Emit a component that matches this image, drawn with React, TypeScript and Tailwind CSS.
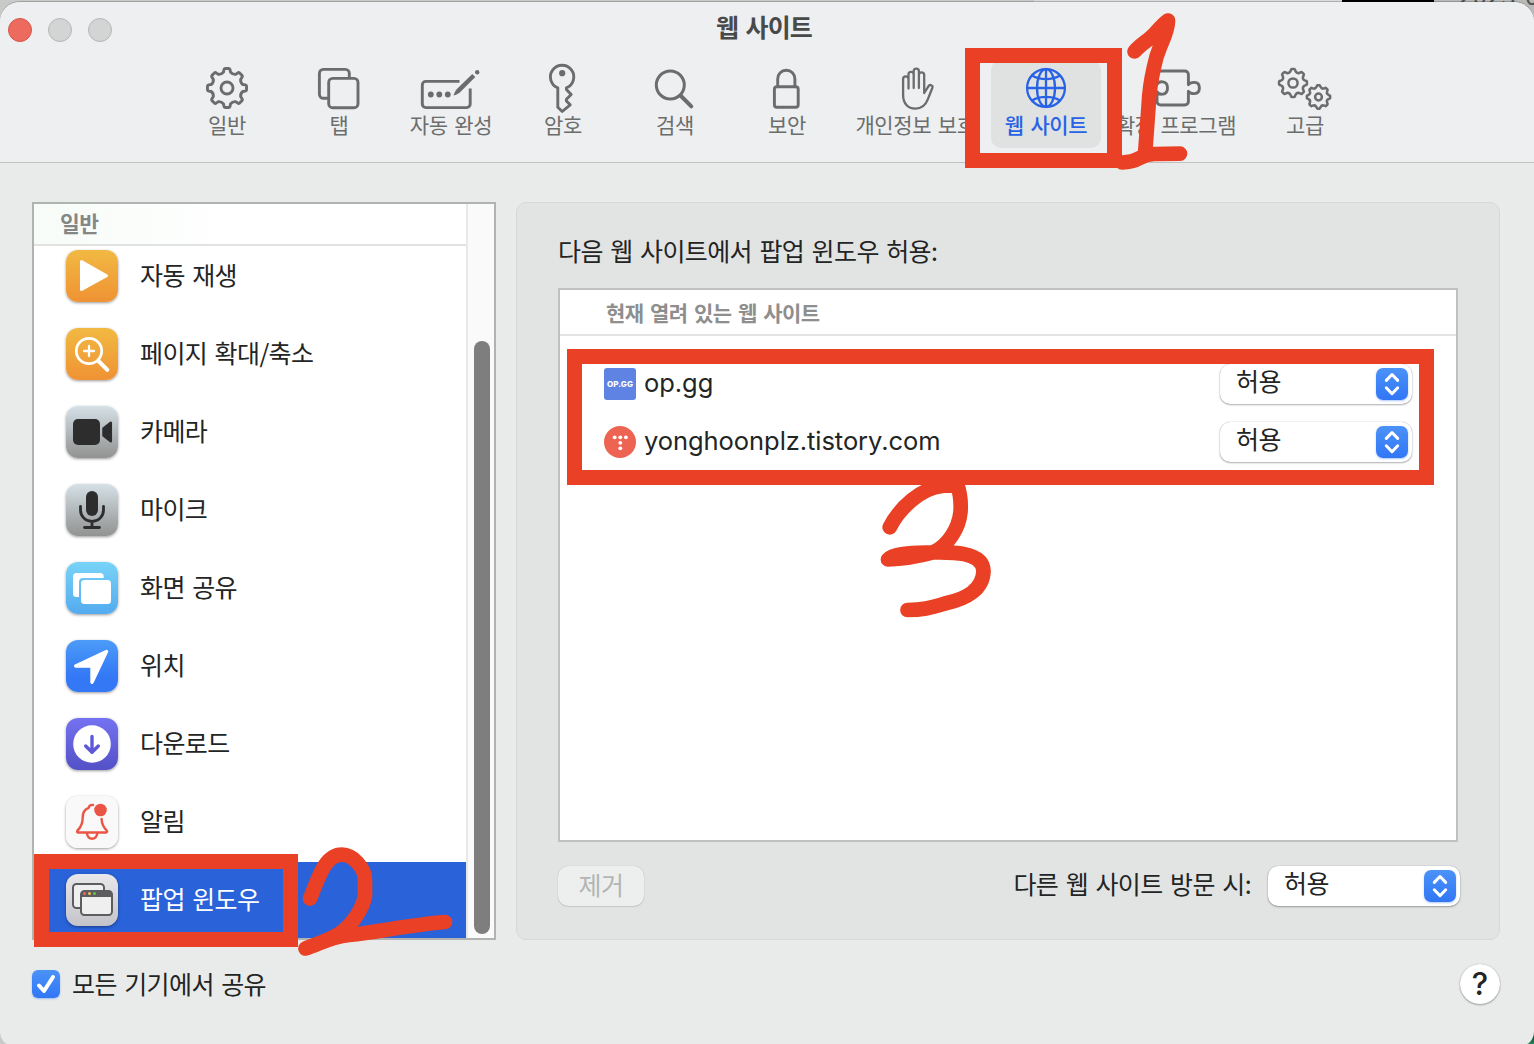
import type { ReactNode } from "react"
import clsx from "clsx"

// Outline of a cog with eight rounded teeth
function gearPath(cx: number, cy: number, outer: number, root: number) {
  const teeth = 8
  const point = (r: number, deg: number) => {
    const a = ((deg - 90) * Math.PI) / 180
    return `${(cx + r * Math.cos(a)).toFixed(2)} ${(cy + r * Math.sin(a)).toFixed(2)}`
  }
  let d = ""
  for (let i = 0; i < teeth; i++) {
    const mid = (i * 360) / teeth
    d += `${i === 0 ? "M" : "L"}${point(root + 1.2, mid - 12.5)}`
    d += `L${point(outer - 1, mid - 9.5)}Q${point(outer, mid - 8.5)} ${point(outer, mid - 5)}`
    d += `L${point(outer, mid + 5)}Q${point(outer, mid + 8.5)} ${point(outer - 1, mid + 9.5)}`
    d += `L${point(root + 1.2, mid + 12.5)}Q${point(root - 0.6, mid + 22.5)} ${point(root + 1.2, mid + 32.5)}`
  }
  return d + "Z"
}

function ToolIcon({ width = 48, children }: { width?: number; children: ReactNode }) {
  return (
    <svg
      width={width}
      height="52"
      viewBox={`0 0 ${width} 52`}
      fill="none"
      stroke="currentColor"
      strokeWidth="2.9"
      strokeLinecap="round"
      strokeLinejoin="round"
    >
      {children}
    </svg>
  )
}

const tools = [
  {
    label: "일반",
    width: "w-28",
    icon: (
      <ToolIcon>
        <path d={gearPath(24, 26, 19.6, 15)} />
        <circle cx="24" cy="26" r="6" />
      </ToolIcon>
    ),
  },
  {
    label: "탭",
    width: "w-28",
    icon: (
      <ToolIcon>
        <path d="M12 36.3H8.4a4 4 0 0 1-4-4V11.4a4 4 0 0 1 4-4h21.9a4 4 0 0 1 4 4V15" />
        <rect x="13.7" y="16.4" width="29.3" height="29.3" rx="4" />
      </ToolIcon>
    ),
  },
  {
    label: "자동 완성",
    width: "w-28",
    icon: (
      <ToolIcon width={66}>
        <path d="M41.5 19.4H7.8a3.5 3.5 0 0 0-3.5 3.5v19.2a3.5 3.5 0 0 0 3.5 3.5h40.9a3.5 3.5 0 0 0 3.5-3.5V26.5" strokeLinecap="butt" />
        <g fill="currentColor" stroke="none">
          <circle cx="12.8" cy="32.5" r="2.9" />
          <circle cx="21.3" cy="32.5" r="2.9" />
          <circle cx="29.8" cy="32.5" r="2.9" />
          <path d="M35.5 33.6c1-3 2-5.2 3.4-6.7L54.3 12l3 3-15.2 15.2c-1.7 1.5-3.9 2.7-6.6 3.4z" />
          <circle cx="59.2" cy="10.2" r="2.2" />
        </g>
      </ToolIcon>
    ),
  },
  {
    label: "암호",
    width: "w-28",
    icon: (
      <ToolIcon>
        <path d="M18.8 25.8a11.7 11.7 0 1 1 8.6 0V27.5l4.8 5-4.8 4.8V39l3.8 3.8-8 6.7-4.4-4.2z" />
        <circle cx="23.2" cy="11.2" r="3.1" fill="currentColor" stroke="none" />
      </ToolIcon>
    ),
  },
  {
    label: "검색",
    width: "w-28",
    icon: (
      <ToolIcon>
        <circle cx="19.3" cy="23" r="14" strokeWidth="3" />
        <path d="M30 34l10.3 10.3" strokeWidth="4" />
      </ToolIcon>
    ),
  },
  {
    label: "보안",
    width: "w-28",
    icon: (
      <ToolIcon>
        <rect x="11.4" y="24.7" width="23.8" height="20.6" rx="2.5" />
        <path d="M14.7 24V17c0-5 3.7-8.7 8.6-8.7s8.6 3.7 8.6 8.7v7" />
      </ToolIcon>
    ),
  },
  {
    label: "개인정보 보호",
    width: "w-[145px]",
    icon: (
      <ToolIcon>
        <path
          d="M17.5 26.5V17a2.7 2.7 0 0 0-5.4 0V33c0 8.5 4.8 13.7 12.3 13.7 6.3 0 10.2-3.5 12.5-9.5l4.4-11.2c1-2.8-2.5-4-3.9-1.7L33.2 31V12.5a2.7 2.7 0 0 0-5.3 0V26M27.9 13V9.3a2.6 2.6 0 0 0-5.2 0V26M22.7 14v-1.5a2.6 2.6 0 0 0-5.2 0V18"
          strokeWidth="2.3"
        />
      </ToolIcon>
    ),
  },
  {
    label: "웹 사이트",
    width: "w-[116px]",
    active: true,
    icon: (
      <ToolIcon>
        <g strokeWidth="2.3">
          <circle cx="24" cy="26" r="18.9" />
          <ellipse cx="24" cy="26" rx="9" ry="18.9" />
          <path d="M24 7v38M5 26h38M10 13.5c8 4.8 20 4.8 28 0M10 38.5c8-4.8 20-4.8 28 0" />
        </g>
      </ToolIcon>
    ),
  },
  {
    label: "확장 프로그램",
    width: "w-36",
    icon: (
      <ToolIcon width={52}>
        <path d="M7 22.2V12.6A3.6 3.6 0 0 1 10.6 9h24.2a3.6 3.6 0 0 1 3.6 3.6v10.2c1.6-2.5 11-5 11 3.2s-9.4 5.7-11 3.2v10.2a3.6 3.6 0 0 1-3.6 3.6H10.6A3.6 3.6 0 0 1 7 39.4V29.8c1.6 3 10.5 4.6 10.5-3.8S8.6 19.2 7 22.2z" />
      </ToolIcon>
    ),
  },
  {
    label: "고급",
    width: "w-[114px]",
    icon: (
      <ToolIcon width={60}>
        <g strokeWidth="2.5">
          <path d={gearPath(18, 21, 14, 10.7)} />
          <circle cx="18" cy="21" r="4.6" />
          <path d={gearPath(43.5, 35, 11.7, 9)} />
          <circle cx="43.5" cy="35" r="3.4" />
        </g>
      </ToolIcon>
    ),
  },
]

function AppIcon({ className, children }: { className: string; children: ReactNode }) {
  return (
    <div className={clsx("mb-0.5 size-[52px] shrink-0 rounded-xl bg-linear-to-b shadow-[0_1px_3px_rgba(0,0,0,0.4)]", className)}>
      <svg width="52" height="52" viewBox="0 0 52 52" fill="none" strokeLinecap="round" strokeLinejoin="round">
        {children}
      </svg>
    </div>
  )
}

const settings = [
  {
    label: "자동 재생",
    icon: (
      <AppIcon className="from-[#f1b942] to-[#ef9234]">
        <path d="M15.5 11.5L40.5 25.7 15.5 39.5z" fill="#fff" stroke="#fff" strokeWidth="3" />
      </AppIcon>
    ),
  },
  {
    label: "페이지 확대/축소",
    icon: (
      <AppIcon className="from-[#f1b942] to-[#ef9234]">
        <g stroke="#fff">
          <circle cx="23" cy="23" r="12.7" strokeWidth="2.7" />
          <path d="M23 18v10M18 23h10" strokeWidth="2.3" />
          <path d="M32.5 33l8.8 8.8" strokeWidth="4" />
        </g>
      </AppIcon>
    ),
  },
  {
    label: "카메라",
    icon: (
      <AppIcon className="from-[#d5e1e7] to-[#929292]">
        <rect x="7" y="13" width="27" height="26" rx="5" fill="#2d2d2d" />
        <path d="M37.5 22.5l7.3-5.8v18.6l-7.3-5.8z" fill="#2d2d2d" stroke="#2d2d2d" strokeWidth="2.5" />
      </AppIcon>
    ),
  },
  {
    label: "마이크",
    icon: (
      <AppIcon className="from-[#d5e1e7] to-[#929292]">
        <rect x="20" y="7" width="12" height="25" rx="6" fill="#2d2d2d" />
        <path d="M14.5 22.5v3.5a11.5 11.5 0 0 0 23 0v-3.5M26 38v5M18.5 43.5h15" stroke="#2d2d2d" strokeWidth="2.8" />
      </AppIcon>
    ),
  },
  {
    label: "화면 공유",
    icon: (
      <AppIcon className="from-[#78d3f7] to-[#54abef]">
        <path d="M13 35h-2.5A3.5 3.5 0 0 1 7 31.5v-17A3.5 3.5 0 0 1 10.5 11H34.2A3.5 3.5 0 0 1 37.7 14.5V16H17a4 4 0 0 0-4 4z" fill="#fff" />
        <rect x="15" y="18" width="30" height="24" rx="3.5" fill="#fff" />
      </AppIcon>
    ),
  },
  {
    label: "위치",
    icon: (
      <AppIcon className="from-[#4c9bf8] via-[#3478f6] via-70% to-[#3478f6]">
        <path d="M40.5 11.5L26 42.3V26H9.7z" fill="#fff" stroke="#fff" strokeWidth="3.4" />
      </AppIcon>
    ),
  },
  {
    label: "다운로드",
    icon: (
      <AppIcon className="from-[#7572f2] to-[#5450c6]">
        <circle cx="26" cy="26" r="18.8" fill="#fff" />
        <path d="M26 18.5V34M19.7 28l6.3 6.3 6.3-6.3" stroke="#5d59d6" strokeWidth="3.4" />
      </AppIcon>
    ),
  },
  {
    label: "알림",
    icon: (
      <AppIcon className="from-[#f9f9f9] to-[#f9f9f9]">
        <g stroke="#eb5545" strokeWidth="2.4">
          <path d="M27 9c-2.5-.5-4 .6-4.3 2.9-4 1.4-6 5-6 9.6 0 6-1.2 9.3-5.2 13-.7.8-.4 2 .7 2h27.8c1 0 1.5-1.2.7-2-3.6-3.5-4.9-6.5-5.1-11.5" />
          <path d="M20.9 37.5c.7 3.4 2.5 5.3 5.2 5.3s4.5-1.9 5.2-5.3" />
        </g>
        <circle cx="34.5" cy="14" r="6.3" fill="#eb5545" />
      </AppIcon>
    ),
  },
  {
    label: "팝업 윈도우",
    selected: true,
    icon: (
      <AppIcon className="from-[#e8e7ea] to-[#c4c3c9]">
        <rect x="7" y="10" width="31" height="24" rx="3.5" fill="#efeff0" stroke="#5d5d5f" strokeWidth="2" />
        <rect x="15" y="17" width="31" height="24" rx="3.5" fill="#efeff0" stroke="#5d5d5f" strokeWidth="2" />
        <path d="M15 23v-3a3 3 0 0 1 3-3h25a3 3 0 0 1 3 3v3z" fill="#5d5d5f" />
        <circle cx="18.5" cy="19.5" r="1.5" fill="#ed6a5e" />
        <circle cx="23.5" cy="19.5" r="1.5" fill="#f4bf4f" />
        <circle cx="28.5" cy="19.5" r="1.5" fill="#61c554" />
      </AppIcon>
    ),
  },
]

const sites = [
  {
    host: "op.gg",
    icon: (
      <div className="flex size-8 items-center justify-center rounded-[3px] bg-[#5f83e2] font-[Inter,sans-serif] text-[8px] font-extrabold tracking-[0.1px] text-white">
        OP.GG
      </div>
    ),
  },
  {
    host: "yonghoonplz.tistory.com",
    icon: (
      <svg width="32" height="32" viewBox="0 0 32 32">
        <circle cx="16" cy="16" r="16" fill="#ed6552" />
        <g fill="#fff">
          <circle cx="10.7" cy="11.3" r="1.9" />
          <circle cx="16.3" cy="11.3" r="1.9" />
          <circle cx="21.9" cy="11.3" r="1.9" />
          <circle cx="16.3" cy="16.8" r="1.9" />
          <circle cx="16.3" cy="22.3" r="1.9" />
        </g>
      </svg>
    ),
  },
]

function PopupButton({ value }: { value: string }) {
  return (
    <button className="flex h-10 w-48 shrink-0 items-center justify-between rounded-[10px] bg-white pr-1 pl-4 shadow-[0_0_1px_rgba(0,0,0,0.35),0_1px_2px_rgba(0,0,0,0.3)]">
      <span className="pb-1.5">{value}</span>
      <span className="flex size-8 items-center justify-center rounded-[7px] bg-linear-to-b from-[#4b92f8] to-[#3176f6] shadow-[0_1px_2px_rgba(49,118,246,0.4)]">
        <svg width="32" height="32" viewBox="0 0 32 32" fill="none" stroke="#fff" strokeWidth="3" strokeLinecap="round" strokeLinejoin="round">
          <path d="M10.3 12.4L16 6.5l5.7 5.9M10.3 19.8l5.7 5.9 5.7-5.9" />
        </svg>
      </span>
    </button>
  )
}

function Toolbar() {
  return (
    <header className="h-[161px] shrink-0 border-b border-[#bfc1c0] bg-[#eeeff1]">
      <div className="relative flex h-[54px] items-center justify-center">
        <div className="absolute left-2 flex gap-4 pt-0.5">
          <span className="size-6 rounded-full border border-[#d5564b] bg-[#ed6a5e]" />
          <span className="size-6 rounded-full border border-[#b5b7b6] bg-[#d3d5d4]" />
          <span className="size-6 rounded-full border border-[#b5b7b6] bg-[#d3d5d4]" />
        </div>
        <h1 className="pr-1.5 pb-[5px] text-[25px] font-bold tracking-[-0.8px] text-[#484a49]">웹 사이트</h1>
      </div>
      <nav className="flex pl-[171px]">
        {tools.map((tool) => (
          <div key={tool.label} className={clsx("flex shrink-0 justify-center pt-1", tool.width)}>
            <button
              className={clsx(
                "flex h-[88px] flex-col items-center rounded-[10px] pt-0.5 text-[21px] tracking-[-0.4px] whitespace-nowrap [word-spacing:2.4px]",
                tool.active ? "w-[110px] bg-[#e0e2e1] font-medium text-[#2862e6]" : "text-[#6b6d6c]",
              )}
            >
              {tool.icon}
              <span className="-mt-1 leading-7">{tool.label}</span>
            </button>
          </div>
        ))}
      </nav>
    </header>
  )
}

function Sidebar() {
  return (
    <aside className="flex h-[738px] w-[464px] overflow-hidden border-2 border-[#b0b3b2] bg-white">
      <div className="w-[432px] shrink-0">
        <div className="relative flex h-[42px] items-center border-b-2 border-[#e1e2e2] bg-linear-to-r from-[#f7fcf8] to-white to-50% pb-0.5 pl-[26px] text-[21.5px] font-bold text-[#858786]">
          일반
        </div>
        <ul className="-mt-2">
          {settings.map((item) => (
            <li
              key={item.label}
              className={clsx("flex h-[78px] items-center gap-[22px] pl-8", item.selected && "bg-[#2962d9] text-white")}
            >
              {item.icon}
              <span className="pb-1">{item.label}</span>
            </li>
          ))}
        </ul>
      </div>
      <div className="flex grow justify-center border-l-2 border-[#e8e8e8] bg-[#fafafa] pt-[137px]">
        <div className="mr-[-2px] h-[593px] w-4 rounded-full bg-[#7e7e7e]" />
      </div>
    </aside>
  )
}

function SitePanel() {
  return (
    <section className="h-[738px] w-[984px] rounded-[10px] border border-[#d7d9d8] bg-[#e2e4e3] px-[41px] pt-[27px]">
      <h2 className="h-[58px] leading-10">다음 웹 사이트에서 팝업 윈도우 허용:</h2>
      <div className="h-[554px] border-2 border-[#bfc0c0] bg-white">
        <div className="flex h-[46px] items-center border-b-2 border-[#e3e3e3] pt-px pl-[46px] text-[21px] font-bold text-[#8e8e8e]">
          현재 열려 있는 웹 사이트
        </div>
        <ul className="pt-[19px]">
          {sites.map((site) => (
            <li key={site.host} className="flex h-[58px] items-center pr-11 pl-11">
              {site.icon}
              <span className="grow pb-px pl-2 font-[Inter,sans-serif] text-[25.5px] tracking-[-0.06px]">{site.host}</span>
              <PopupButton value="허용" />
            </li>
          ))}
        </ul>
      </div>
      <div className="mt-6 -mr-0.5 flex h-10 items-center">
        <button className="h-10 w-[86px] rounded-[10px] bg-[#edefee] pb-2 text-[#b3b5b4] shadow-[0_0_1px_rgba(0,0,0,0.25),0_1px_1px_rgba(0,0,0,0.1)]">
          제거
        </button>
        <span className="mr-[17px] ml-auto pb-1">다른 웹 사이트 방문 시:</span>
        <PopupButton value="허용" />
      </div>
    </section>
  )
}

// Hand-drawn step markers laid over the window
function Markers() {
  return (
    <>
      <div className="absolute top-12 left-[965px] h-[120px] w-[157px] border-[15px] border-[#ea4025]" />
      <div className="absolute top-[854px] left-[34px] h-[93px] w-[264px] border-[15px] border-[#ea4025]" />
      <div className="absolute top-[349px] left-[567px] h-[136px] w-[867px] border-[15px] border-[#ea4025]" />
      <svg
        className="absolute inset-0"
        width="1534"
        height="1044"
        fill="none"
        stroke="#ea4025"
        strokeWidth="14.7"
        strokeLinecap="round"
        strokeLinejoin="round"
      >
        <path d="M1134.5 51.5C1141 44 1149 40 1154 34.5C1159 29 1163 24 1168 20.5C1168 30 1163 40 1160 47C1157 54 1155 62 1154 67C1151 80 1149 95 1148.5 107L1145 155" />
        <path d="M1122 162.5C1142 162 1138 154 1155 154L1180 153.7" />
        <path d="M310 898.5C318 880 324 854.7 342 854.7C353 854.7 365 868 365 880V896C363 908 353 923 343 931C334 939 318 943 305.5 948.5C318 945 328 937.5 349 935C380 931.5 410 925 445 922" />
        <path d="M889.7 527.3C900 507 922 488 942 486L957 484C961 495 961 505 960.5 512C959 528 948 546 933 552.5C920 556 905 559 888 559.5C893 553 915 553 930 552.5C950 552 983 551 983.5 571C983 589 967 599 945 603.5C930 608 922 610 907.5 610" />
      </svg>
    </>
  )
}

export default function App() {
  return (
    <div className="relative h-[1044px] w-[1534px] overflow-hidden bg-[#c8cac8] font-['Noto_Sans_CJK_KR',sans-serif] text-[25px] tracking-[-0.6px] text-[#232424] [word-spacing:2.4px]">
      {/* slivers of the page behind the window */}
      <div className="absolute top-0 right-0 flex h-5 w-[500px] bg-[#d9dbda]">
        <div className="ml-[308px] w-[92px] bg-black" />
        <div className="relative grow overflow-hidden bg-[#b8bab9]">
          <span className="absolute -top-[20px] left-6 text-[26px] leading-7 tracking-normal whitespace-nowrap text-[#555]">2023-0</span>
        </div>
      </div>
      <div className="absolute right-0 bottom-0 size-5 bg-linear-to-t from-[#1f8a5c] to-black" />
      <div className="absolute inset-x-0 top-0.5 flex h-[1044px] flex-col rounded-t-[20px] rounded-b-[14px] bg-[#e9ebea] shadow-[0_-1px_0_rgba(0,0,0,0.2)] *:first:rounded-t-[20px]">
        <Toolbar />
        <main className="px-8 pt-[39px]">
          <div className="flex gap-5">
            <Sidebar />
            <SitePanel />
          </div>
          <footer className="mt-6 flex h-10 items-center">
            <span className="flex size-7 items-center justify-center rounded-md bg-linear-to-b from-[#4b92f8] to-[#3176f6] shadow-[0_1px_2px_rgba(49,118,246,0.4)]">
              <svg width="28" height="28" viewBox="0 0 28 28" fill="none" stroke="#fff" strokeWidth="4" strokeLinecap="round" strokeLinejoin="round">
                <path d="M7 15.5l5 5.5L21 7" />
              </svg>
            </span>
            <span className="pb-px pl-3">모든 기기에서 공유</span>
            <button className="mr-[2px] ml-auto size-10 rounded-full bg-white font-[Inter,sans-serif] text-[31px] leading-10 font-medium tracking-normal shadow-[0_0_1px_rgba(0,0,0,0.35),0_1px_2px_rgba(0,0,0,0.3)]">
              ?
            </button>
          </footer>
        </main>
      </div>
      <Markers />
    </div>
  )
}
